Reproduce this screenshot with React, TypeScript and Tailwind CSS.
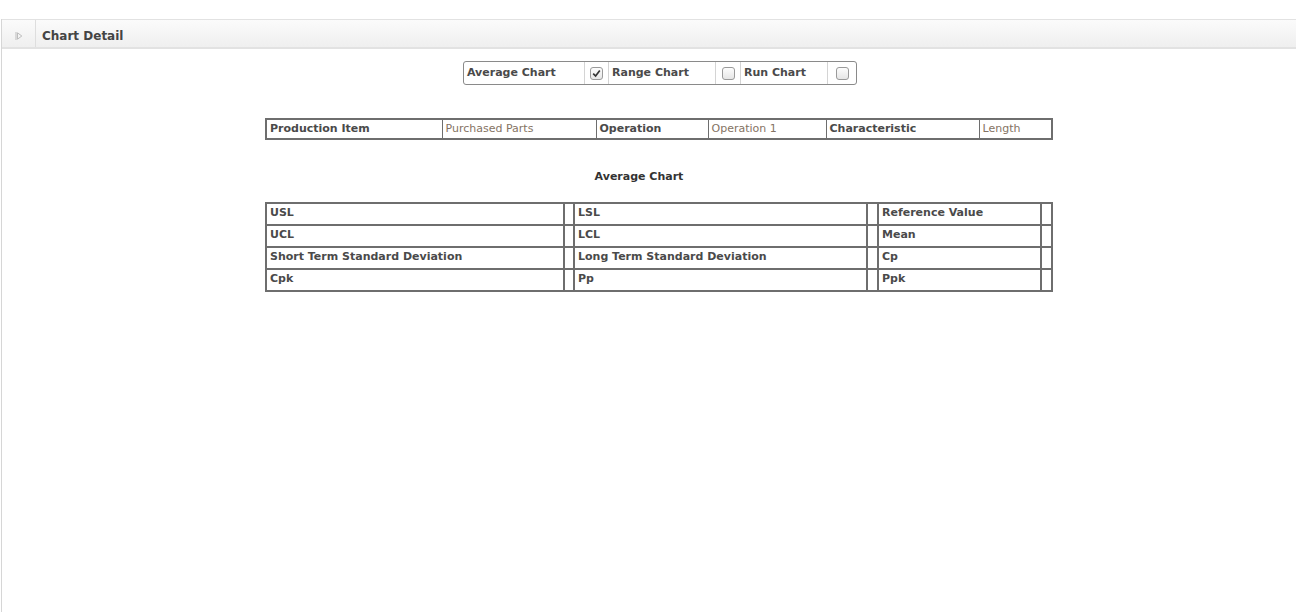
import React from "react";

const font = { fontFamily: '"DejaVu Sans", Verdana, sans-serif' };

function Box({ checked }: { checked?: boolean }) {
  return (
    <span className="inline-flex h-[13px] w-[13px] items-center justify-center rounded-[3px] border border-[#9a9a9a] bg-gradient-to-b from-[#fdfdfd] to-[#e6e6e6]">
      {checked && (
        <svg width="9" height="9" viewBox="0 0 9 9">
          <path d="M1.2 4.6 L3.6 7 L7.8 1.6" fill="none" stroke="#333" strokeWidth="1.7" />
        </svg>
      )}
    </span>
  );
}

const stats = [
  ["USL", "LSL", "Reference Value"],
  ["UCL", "LCL", "Mean"],
  ["Short Term Standard Deviation", "Long Term Standard Deviation", "Cp"],
  ["Cpk", "Pp", "Ppk"],
];

export default function App() {
  return (
    <div className="h-[612px] w-full bg-white pt-[19px] text-[#4a4a4a]" style={font}>
      <div className="ml-px h-[593px] border-l border-[#d6d6d6]">
        {/* header */}
        <div className="flex h-[30px] items-stretch border-t border-b-2 border-[#e2e2e2] bg-gradient-to-b from-[#fbfbfb] to-[#efefef]">
          <div className="flex w-[34px] items-center justify-center border-r border-[#dedede] pt-[4px]">
            <svg width="8" height="10" viewBox="0 0 8 10">
              <path d="M1 1 V9" stroke="#bdbdbd" strokeWidth="1" />
              <path d="M2.5 1.8 L6.8 5 L2.5 8.2 Z" fill="none" stroke="#bdbdbd" strokeWidth="1" />
            </svg>
          </div>
          <div className="flex items-center pl-[6px] pt-[4px] text-[12px] font-bold text-[#444]">Chart Detail</div>
        </div>

        {/* chart type checkboxes */}
        <div className="mt-[12px] ml-[461px] flex">
          <div className="flex h-[24px] rounded-[3px] border border-[#8a8a8a] text-[11px] font-bold">
            <div className="flex w-[120px] items-center pl-[3px]">Average Chart</div>
            <div className="flex w-[25px] items-center justify-center border-x border-[#d4d4d4]"><Box checked /></div>
            <div className="flex w-[106px] items-center pl-[3px]">Range Chart</div>
            <div className="flex w-[26px] items-center justify-center border-x border-[#d4d4d4]"><Box /></div>
            <div className="flex w-[86px] items-center pl-[3px]">Run Chart</div>
            <div className="flex w-[29px] items-center justify-center border-l border-[#d4d4d4]"><Box /></div>
          </div>
        </div>

        {/* info table */}
        <div className="mt-[33px] ml-[263px] flex">
          <table className="w-[788px] border-collapse border-2 border-[#6e6e6e] text-[11px]">
            <tbody>
              <tr className="h-[20px]">
                <td className="w-[176px] border border-[#6e6e6e] px-[3px] pt-px font-bold">Production Item</td>
                <td className="w-[154px] border border-[#6e6e6e] px-[3px] pt-px text-[#857363]">Purchased Parts</td>
                <td className="w-[112px] border border-[#6e6e6e] px-[3px] pt-px font-bold">Operation</td>
                <td className="w-[118px] border border-[#6e6e6e] px-[3px] pt-px text-[#857363]">Operation 1</td>
                <td className="w-[153px] border border-[#6e6e6e] px-[3px] pt-px font-bold">Characteristic</td>
                <td className="border border-[#6e6e6e] px-[3px] pt-px text-[#857363]">Length</td>
              </tr>
            </tbody>
          </table>
        </div>

        <div className="mt-[29px] ml-[263px] w-[748px] text-center text-[11px] font-bold text-[#333]">Average Chart</div>

        {/* stats table */}
        <div className="mt-[16px] ml-[263px] flex">
          <table className="w-[788px] border-collapse border-2 border-[#6e6e6e] text-[11px] font-bold">
            <tbody>
              {stats.map((r, i) => (
                <tr key={i} className="h-[22px]">
                  <td className="w-[298px] border-2 border-[#6e6e6e] px-[3px]">{r[0]}</td>
                  <td className="w-[10px] border-2 border-[#6e6e6e]"></td>
                  <td className="w-[293px] border-2 border-[#6e6e6e] px-[3px]">{r[1]}</td>
                  <td className="w-[11px] border-2 border-[#6e6e6e]"></td>
                  <td className="w-[163px] border-2 border-[#6e6e6e] px-[3px]">{r[2]}</td>
                  <td className="border-2 border-[#6e6e6e]"></td>
                </tr>
              ))}
            </tbody>
          </table>
        </div>
      </div>
    </div>
  );
}
